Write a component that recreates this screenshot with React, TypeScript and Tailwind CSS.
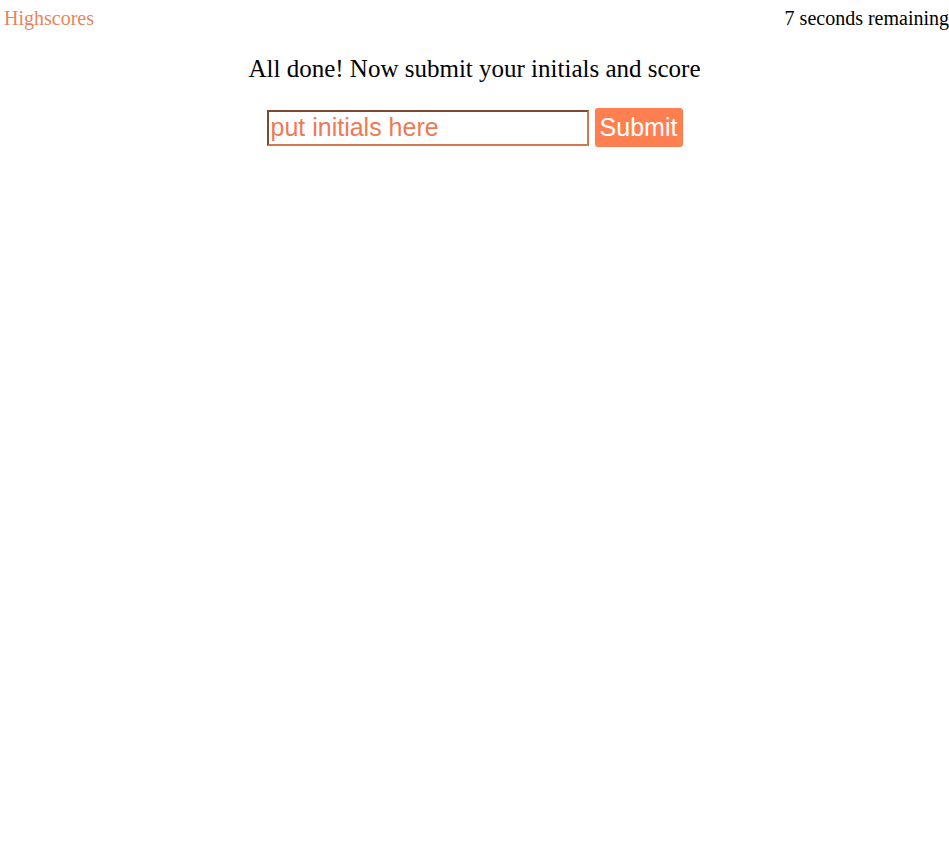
export default function App() {
  return (
    <div className="min-h-screen bg-white font-['Liberation_Serif',serif]">
      <header className="flex justify-between items-start pt-[6px] pl-1 text-[20px] leading-[24px]">
        <a href="#" className="text-[#e9845c]">
          Highscores
        </a>
        <span className="text-black">7 seconds remaining</span>
      </header>

      <main className="flex flex-col items-center">
        <h2 className="mt-[24px] text-[25px] leading-[29px] text-black">
          All done! Now submit your initials and score
        </h2>
        <form className="mt-[25px] flex items-center gap-[6px]" onSubmit={(e) => e.preventDefault()}>
          <input
            type="text"
            placeholder="put initials here"
            className="w-[322px] h-[36px] border-2 [border-style:inset] border-[#d4774f] px-[2px] text-[25px] font-['Liberation_Sans',sans-serif] text-[#ee7a55] placeholder:text-[#ee7a55] outline-none"
          />
          <button
            type="submit"
            className="h-[39px] w-[88px] rounded-[3px] bg-[#ff7f50] text-white text-[25px] font-['Liberation_Sans',sans-serif]"
          >
            Submit
          </button>
        </form>
      </main>
    </div>
  );
}
